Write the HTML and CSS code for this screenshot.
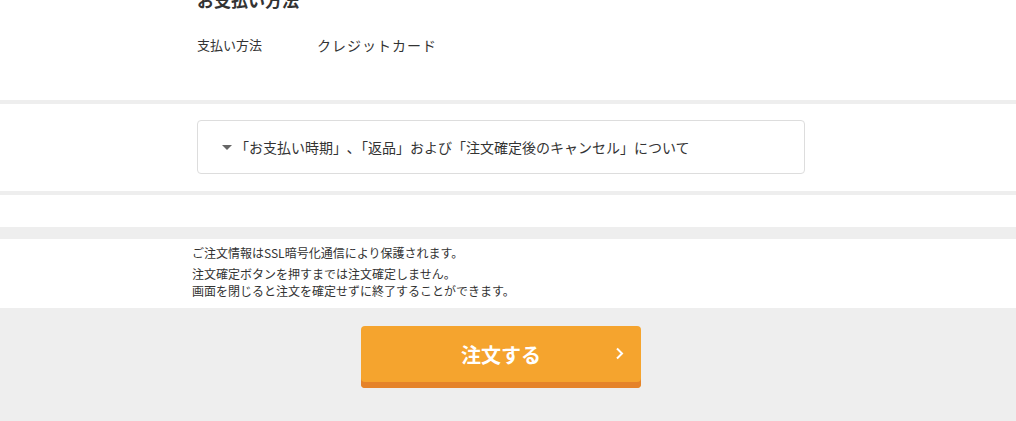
FILE: index.html
```html
<!DOCTYPE html>
<html lang="ja">
<head>
<meta charset="utf-8">
<link rel="stylesheet" href="styles.css">
</head>
<body>
<div class="page">
  <section class="block block-pay">
    <div class="inner">
      <h2 class="title">お支払い方法</h2>
      <div class="row">
        <div class="row-label">支払い方法</div>
        <div class="row-value">クレジットカード</div>
      </div>
    </div>
  </section>
  <div class="sep sep-thin"></div>
  <section class="block block-acc">
    <div class="inner">
      <div class="acc">
        <span class="acc-arrow"></span>
        <span class="acc-text">「お支払い時期」､「返品」および「注文確定後のキャンセル」について</span>
      </div>
    </div>
  </section>
  <div class="sep sep-thin"></div>
  <div class="spacer"></div>
  <div class="sep sep-thick"></div>
  <section class="notes">
    <div class="notes-inner">
      <p class="note note-first">ご注文情報はSSL暗号化通信により保護されます。</p>
      <p class="note">注文確定ボタンを押すまでは注文確定しません。<br>画面を閉じると注文を確定せずに終了することができます。</p>
    </div>
  </section>
  <section class="order">
    <button class="order-btn" type="button">
      <span class="order-label">注文する</span>
      <svg class="order-chev" width="9" height="13" viewBox="0 0 9 13"><path d="M2 1.5 L7 6.5 L2 11.5" fill="none" stroke="#fff" stroke-width="2"/></svg>
    </button>
  </section>
</div>
</body>
</html>
```
FILE: styles.css
```css
* { box-sizing: border-box; }
html, body { margin: 0; padding: 0; background: #fff; }
body {
  font-family: "Noto Sans CJK JP", "Noto Sans", sans-serif;
  color: #333;
  overflow: hidden;
}
.page { margin-top: -12px; }
.block, .notes, .order { padding-right: 14px; }
.inner { width: 608px; margin: 0 auto; }
.block-pay { height: 112px; }
.title {
  margin: 0;
  font-size: 17px;
  font-weight: 700;
  line-height: 24px;
  color: #333;
}
.row { display: flex; align-items: center; margin-top: 23px; }
.row-label { width: 120px; font-size: 13px; line-height: 20px; color: #333; }
.row-value { font-size: 14px; line-height: 20px; color: #333; letter-spacing: 1px; }
.sep { background: #eee; }
.sep-thin { height: 4px; }
.sep-thick { height: 12px; }
.block-acc { padding-top: 16px; padding-bottom: 17px; }
.acc {
  height: 54px;
  border: 1px solid #ddd;
  border-radius: 4px;
  display: flex;
  align-items: center;
  padding-left: 24px;
}
.acc-arrow {
  width: 0; height: 0;
  border-left: 5px solid transparent;
  border-right: 5px solid transparent;
  border-top: 5px solid #666;
  margin-right: 3px;
  margin-top: 1px;
}
.acc-text { font-size: 14px; line-height: 20px; color: #333; }
.spacer { height: 32px; }
.notes { height: 69px; }
.notes-inner { width: 618px; margin: 0 auto; padding-top: 5px; }
.note { margin: 0; font-size: 12px; line-height: 17px; color: #333; }
.note-first { margin-bottom: 4px; }
.order {
  background: #eee;
  height: 130px;
  padding-top: 18px;
  display: flex;
  justify-content: center;
  align-items: flex-start;
}
.order-btn {
  width: 280px;
  height: 62px;
  border: 0;
  border-radius: 4px;
  background: #f5a42e;
  box-shadow: inset 0 -6px 0 #e5832a;
  display: flex;
  align-items: center;
  justify-content: center;
  position: relative;
  padding: 0 0 6px;
  font-family: inherit;
  cursor: pointer;
}
.order-label { color: #fff; font-size: 20px; font-weight: 700; line-height: 24px; margin-top: 2px; }
.order-chev { position: absolute; right: 17px; top: 21px; }
```
